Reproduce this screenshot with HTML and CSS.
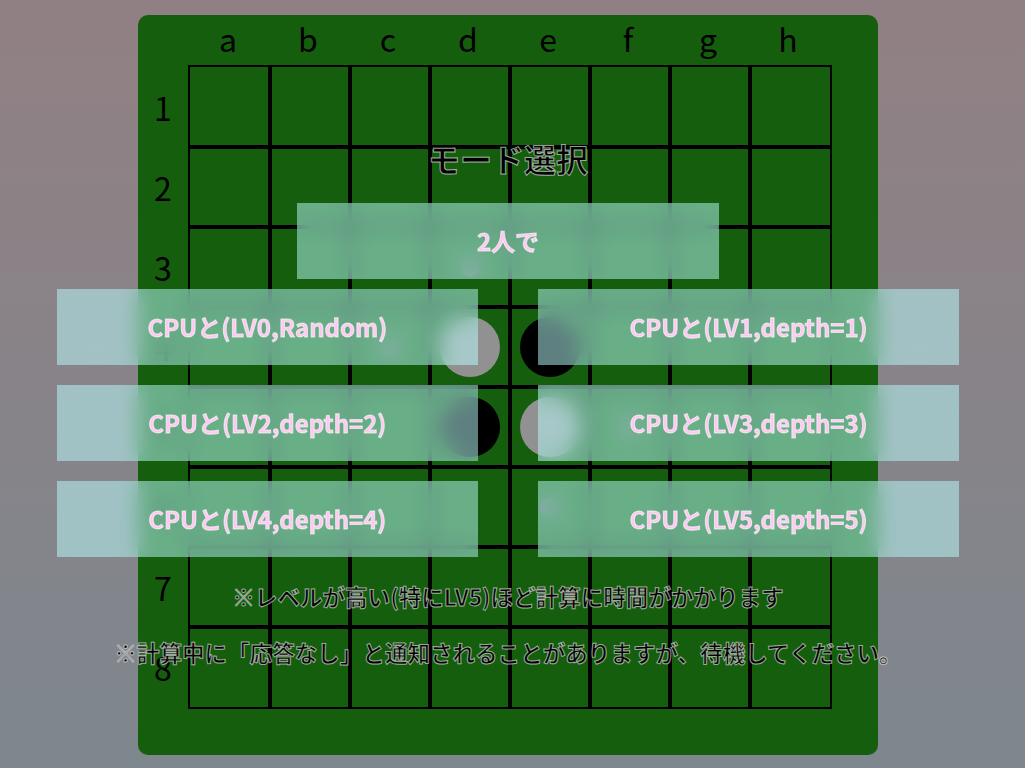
FILE: index.html
```html
<!DOCTYPE html>
<html lang="ja">
<head>
<meta charset="utf-8">
<meta name="viewport" content="width=device-width, initial-scale=1">
<title>モード選択</title>
<link rel="stylesheet" href="styles.css">
</head>
<body>
<main class="game">
  <div class="board">
    <div class="columns"><span>a</span><span>b</span><span>c</span><span>d</span><span>e</span><span>f</span><span>g</span><span>h</span></div>
    <div class="rows"><span>1</span><span>2</span><span>3</span><span>4</span><span>5</span><span>6</span><span>7</span><span>8</span></div>
    <div class="cells" id="cells"></div>
  </div>
</main>
<section class="menu" aria-labelledby="menu-title">
  <h1 class="title" id="menu-title">モード選択</h1>
  <button class="mode" type="button">2人で</button>
  <div class="levels">
    <button class="mode" type="button">CPUと(LV0,Random)</button>
    <button class="mode" type="button">CPUと(LV1,depth=1)</button>
    <button class="mode" type="button">CPUと(LV2,depth=2)</button>
    <button class="mode" type="button">CPUと(LV3,depth=3)</button>
    <button class="mode" type="button">CPUと(LV4,depth=4)</button>
    <button class="mode" type="button">CPUと(LV5,depth=5)</button>
  </div>
  <p class="note">※レベルが高い(特にLV5)ほど計算に時間がかかります</p>
  <p class="note">※計算中に「応答なし」と通知されることがありますが、待機してください。</p>
</section>
<script src="board.js"></script>
</body>
</html>
```
FILE: styles.css
```css
* {
  box-sizing: border-box;
}

body {
  margin: 0;
  min-height: 100vh;
  overflow: hidden;
  position: relative;
  font-family: "Noto Sans CJK JP", sans-serif;
  color: #000;
  background: linear-gradient(#918083, #7e878e);
}

.game {
  display: flex;
  justify-content: center;
  padding: 15px 9px 13px 0;
}

.board {
  display: grid;
  grid-template-columns: 48px auto;
  grid-template-rows: 50px auto;
  padding: 0 46px 46px 2px;
  border-radius: 10px;
  background: #155e0e;
  font-size: 32px;
  line-height: 46px;
  text-align: center;
}

.columns {
  grid-column: 2;
  display: grid;
  grid-template-columns: repeat(8, 80px);
}

.rows {
  display: grid;
  grid-template-rows: repeat(8, 80px);
  padding: 2px 2px 0 0;
  align-items: center;
}

.cells {
  display: grid;
  grid-template-columns: 78px repeat(6, 76px) 78px;
  grid-template-rows: 78px repeat(6, 76px) 78px;
  gap: 4px;
  padding: 2px;
  background: #000;
}

.cell {
  display: grid;
  place-items: center;
  background: #155e0e;
}

.disc {
  width: 60px;
  height: 60px;
  border-radius: 50%;
}

.black {
  background: #000;
}

.white {
  background: #919191;
}

.hint {
  width: 20px;
  height: 20px;
  border-radius: 50%;
  background: #5a5a5f;
}

.menu {
  position: absolute;
  inset: 0;
  display: flex;
  flex-direction: column;
  align-items: center;
  padding: 134px 9px 0 0;
}

.title {
  margin: 0 0 21px;
  font-size: 32px;
  font-weight: bold;
  line-height: 48px;
  -webkit-text-stroke: 1px rgba(255, 255, 255, 0.6);
}

.mode {
  width: calc(41vw + 1px);
  height: 76px;
  padding: 0;
  border: 0;
  font: bold 24px/36px "Noto Sans CJK JP", sans-serif;
  color: #ffc8f0;
  -webkit-text-stroke: 1px rgba(255, 255, 255, 0.6);
  background: rgba(188, 255, 255, 0.5);
  backdrop-filter: blur(10px);
}

.levels {
  display: grid;
  grid-template-columns: auto auto;
  gap: 20px 60px;
  margin: 10px 0 23px;
}

.note {
  margin: 0 0 23px;
  font-size: 2.2vw;
  font-weight: bold;
  line-height: 33px;
  white-space: nowrap;
  -webkit-text-stroke: 1px rgba(255, 255, 255, 0.6);
}
```
FILE: board.js
```js
const pieces = {
  d4: "disc white",
  e4: "disc black",
  d5: "disc black",
  e5: "disc white",
  d3: "hint",
  c4: "hint",
  f5: "hint",
  e6: "hint"
};
const cells = document.getElementById("cells");

for (let row = 1; row <= 8; row++) {
  for (const column of "abcdefgh") {
    const cell = document.createElement("div");
    cell.className = "cell";
    const kind = pieces[column + row];
    if (kind) {
      const piece = document.createElement("span");
      piece.className = kind;
      cell.append(piece);
    }
    cells.append(cell);
  }
}
```
